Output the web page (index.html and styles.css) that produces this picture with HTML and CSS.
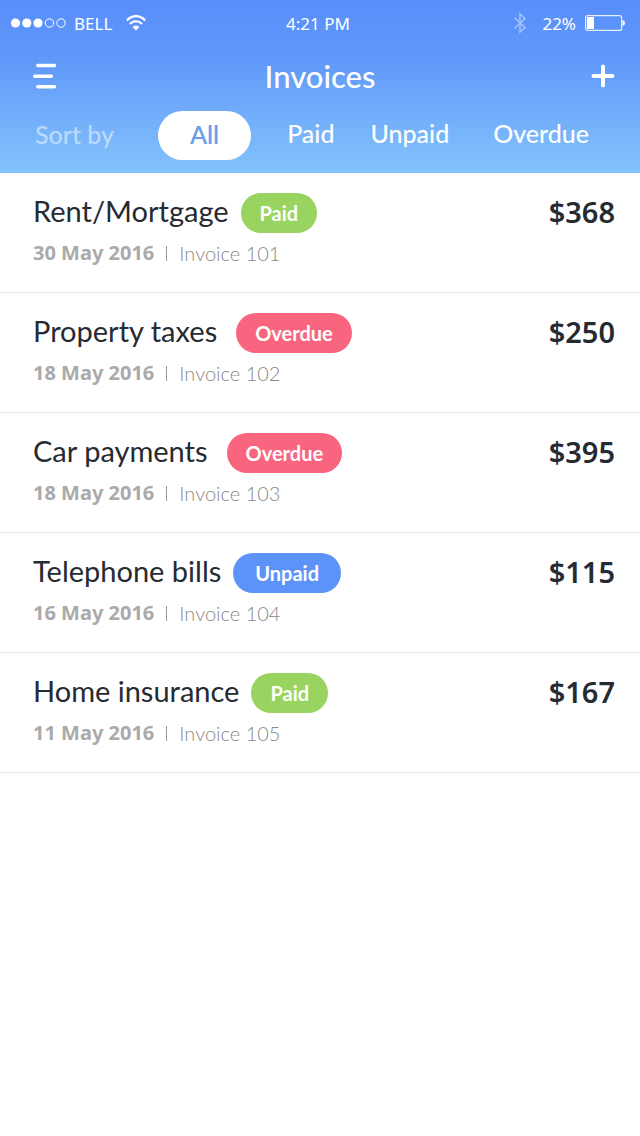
FILE: index.html
```html
<!DOCTYPE html>
<html lang="en">
<head>
<meta charset="utf-8">
<meta name="viewport" content="width=device-width, initial-scale=1">
<title>Invoices</title>
<link rel="stylesheet" href="styles.css">
</head>
<body>
<header class="header">
  <div class="status">
    <div class="status-left">
      <svg class="signal" width="56" height="10" viewBox="0 0 56 10" aria-hidden="true">
        <g fill="#fff"><circle cx="5.500" cy="5" r="4.600"/><circle cx="16.800" cy="5" r="4.600"/><circle cx="28" cy="5" r="4.600"/></g>
        <g fill="none" stroke="#fff"><circle cx="39.500" cy="5" r="4.200"/><circle cx="51" cy="5" r="4.200"/></g>
      </svg>
      <span>BELL</span>
      <svg class="wifi" width="20" height="16" viewBox="0 0 20 16" aria-hidden="true">
        <g fill="none" stroke="#fff" stroke-width="2.200"><path d="M.9 5.400C6-.3 14-.3 19.100 5.400"/><path d="M4 9c3.300-3.700 8.700-3.700 12 0"/></g>
        <path d="M6.500 12C8.500 9.900 11.500 9.900 13.500 12L10 15.600z" fill="#fff"/>
      </svg>
    </div>
    <span class="clock">4:21 PM</span>
    <div class="status-right">
      <svg class="bluetooth" width="14" height="22" viewBox="0 0 14 22" aria-hidden="true"><path d="M1.500 5.500l10.500 10L7 20V2l5 4.500-10.500 10" fill="none" stroke="#fff" stroke-width="1.500"/></svg>
      <span>22%</span>
      <svg class="battery" width="41" height="16" viewBox="0 0 41 16" aria-hidden="true"><rect x=".6" y=".6" width="36" height="14.800" rx="2" fill="none" stroke="#fff" stroke-opacity=".85" stroke-width="1.200"/><rect x="2" y="2" width="7" height="12" fill="#fff"/><path d="M37.500 5c3.300.5 3.300 5.500 0 6z" fill="#fff"/></svg>
    </div>
  </div>
  <div class="titlebar">
    <button class="icon-button icon-menu" type="button" aria-label="Menu"><svg width="24" height="26" viewBox="0 0 24 26"><path d="M5.800 2.500h16.500M2.800 13.200h16.500M5.800 23.800h16.500" stroke="#fff" stroke-width="3.600" stroke-linecap="round"/></svg></button>
    <h1 class="title">Invoices</h1>
    <button class="icon-button icon-add" type="button" aria-label="Add invoice"><svg width="24" height="24" viewBox="0 0 24 24"><path d="M2.500 12h19M12 2.500v19" stroke="#fff" stroke-width="4" stroke-linecap="round"/></svg></button>
  </div>
  <nav class="filters" aria-label="Filter invoices">
    <span class="filters-label">Sort by</span>
    <button class="filter filter-active" type="button">All</button>
    <button class="filter" type="button">Paid</button>
    <button class="filter" type="button">Unpaid</button>
    <button class="filter filter-last" type="button">Overdue</button>
  </nav>
</header>
<main>
  <ul class="invoices">
    <li class="invoice">
      <div class="summary"><h2 class="name">Rent/Mortgage</h2><span class="badge paid">Paid</span></div>
      <strong class="amount">$368</strong>
      <p class="meta"><b class="date">30 May 2016</b><span class="divider"></span><span>Invoice 101</span></p>
    </li>
    <li class="invoice">
      <div class="summary"><h2 class="name">Property taxes</h2><span class="badge overdue">Overdue</span></div>
      <strong class="amount">$250</strong>
      <p class="meta"><b class="date">18 May 2016</b><span class="divider"></span><span>Invoice 102</span></p>
    </li>
    <li class="invoice">
      <div class="summary"><h2 class="name">Car payments</h2><span class="badge overdue">Overdue</span></div>
      <strong class="amount">$395</strong>
      <p class="meta"><b class="date">18 May 2016</b><span class="divider"></span><span>Invoice 103</span></p>
    </li>
    <li class="invoice">
      <div class="summary"><h2 class="name">Telephone bills</h2><span class="badge unpaid">Unpaid</span></div>
      <strong class="amount">$115</strong>
      <p class="meta"><b class="date">16 May 2016</b><span class="divider"></span><span>Invoice 104</span></p>
    </li>
    <li class="invoice">
      <div class="summary"><h2 class="name">Home insurance</h2><span class="badge paid">Paid</span></div>
      <strong class="amount">$167</strong>
      <p class="meta"><b class="date">11 May 2016</b><span class="divider"></span><span>Invoice 105</span></p>
    </li>
  </ul>
</main>
</body>
</html>
```
FILE: styles.css
```css
* { box-sizing: border-box; }
body { margin: 0; background: #fff; color: #262a31; font-family: Lato, sans-serif; }
button { padding: 0; border: 0; background: none; color: inherit; font: inherit; cursor: pointer; }
svg { display: block; flex: none; }

.header { padding-bottom: 13px; background: linear-gradient(#588efa, #6199f9 35%, #83c3fb); color: #fff; }
.status {
  display: grid; grid-template-columns: 1fr auto 1fr; align-items: center;
  height: 46px; padding: 0 14px 0 10px;
  font: 17px "Noto Sans", sans-serif;
}
.status-left, .status-right { display: flex; align-items: center; }
.status-left { gap: 8px; }
.wifi { margin-left: 6px; }
.status-right { justify-content: flex-end; gap: 9px; }
.bluetooth { margin-right: 6px; opacity: .45; }

.titlebar { display: grid; grid-template-columns: 1fr auto 1fr; align-items: center; height: 60px; padding: 0 25px; }
.icon-menu { justify-self: start; margin-left: 7px; }
.icon-add { justify-self: end; }
.title { margin: 0; font-size: 31px; font-weight: 500; }

.filters {
  display: flex; align-items: center; justify-content: space-between;
  margin-top: 5px; padding: 0 51px 0 35px;
  font-size: 25px; font-weight: 500;
}
.filters-label { margin-right: 8px; padding-bottom: 4px; opacity: .5; }
.filter { height: 49px; padding-bottom: 5px; }
.filter-active { padding: 0 32px 4px; border-radius: 25px; background: #fff; color: #699fee; font-weight: 600; }
.filter-last { margin-left: 8px; }

.invoices { margin: 0; padding: 0; list-style: none; }
.invoice {
  display: grid; grid-template-columns: 1fr auto; align-items: center; row-gap: 6px;
  padding: 20px 25px 25px 33px; border-bottom: 1px solid #e4e4e4;
}
.summary { display: flex; align-items: center; gap: 12px; }
.name { margin: 0; padding-bottom: 4px; font-size: 29px; font-weight: 400; line-height: 36px; }
.badge { padding: 0 19px; border-radius: 20px; color: #fff; font-size: 20px; font-weight: 700; line-height: 40px; }
.paid { background: #99d460; }
.overdue { margin-left: 7px; background: #f9657e; }
.unpaid { padding: 0 22px; background: #5d93f8; }
.amount { padding-bottom: 2px; font: 600 29px/38px "Noto Sans", sans-serif; }
.meta { display: flex; align-items: center; margin: 0; color: #888; font-size: 20px; font-weight: 300; line-height: 28px; }
.date { color: #aaa; font: 700 20px/28px "Noto Sans", sans-serif; }
.divider { width: 1px; height: 15px; margin: 0 12px; background: #999; }
```
